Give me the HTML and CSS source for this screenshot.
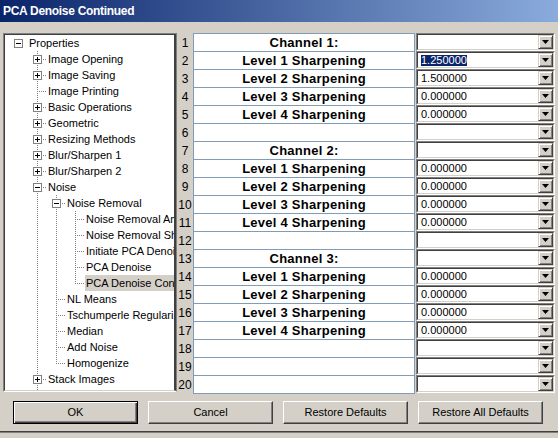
FILE: index.html
```html
<!DOCTYPE html>
<html lang="en">
<head>
    <meta charset="UTF-8">
    <title>PCA Denoise Continued</title>
    <link rel="stylesheet" href="styles.css">
</head>
<body>
    <div class="titlebar">PCA Denoise Continued</div>

    <div class="main">
        <div class="tree">
            <div class="tree-body">
                <div class="node"><span class="cell root"><span class="box"></span></span><span class="text">Properties</span></div>
                <div class="node child"><span class="cell tee"><span class="box plus"></span></span><span class="text">Image Opening</span></div>
                <div class="node child"><span class="cell tee"><span class="box plus"></span></span><span class="text">Image Saving</span></div>
                <div class="node child"><span class="cell tee"></span><span class="text">Image Printing</span></div>
                <div class="node child"><span class="cell tee"><span class="box plus"></span></span><span class="text">Basic Operations</span></div>
                <div class="node child"><span class="cell tee"><span class="box plus"></span></span><span class="text">Geometric</span></div>
                <div class="node child"><span class="cell tee"><span class="box plus"></span></span><span class="text">Resizing Methods</span></div>
                <div class="node child"><span class="cell tee"><span class="box plus"></span></span><span class="text">Blur/Sharpen 1</span></div>
                <div class="node child"><span class="cell tee"><span class="box plus"></span></span><span class="text">Blur/Sharpen 2</span></div>
                <div class="node child"><span class="cell tee"><span class="box"></span></span><span class="text">Noise</span></div>
                <div class="node child"><span class="cell pipe"></span><span class="cell tee"><span class="box"></span></span><span class="text">Noise Removal</span></div>
                <div class="node child"><span class="cell pipe"></span><span class="cell pipe"></span><span class="cell tee"></span><span class="text">Noise Removal Amount</span></div>
                <div class="node child"><span class="cell pipe"></span><span class="cell pipe"></span><span class="cell tee"></span><span class="text">Noise Removal Sharpening</span></div>
                <div class="node child"><span class="cell pipe"></span><span class="cell pipe"></span><span class="cell tee"></span><span class="text">Initiate PCA Denoise</span></div>
                <div class="node child"><span class="cell pipe"></span><span class="cell pipe"></span><span class="cell tee"></span><span class="text">PCA Denoise</span></div>
                <div class="node child"><span class="cell pipe"></span><span class="cell pipe"></span><span class="cell end"></span><span class="text sel">PCA Denoise Continued</span></div>
                <div class="node child"><span class="cell pipe"></span><span class="cell tee"></span><span class="text">NL Means</span></div>
                <div class="node child"><span class="cell pipe"></span><span class="cell tee"></span><span class="text">Tschumperle Regularization</span></div>
                <div class="node child"><span class="cell pipe"></span><span class="cell tee"></span><span class="text">Median</span></div>
                <div class="node child"><span class="cell pipe"></span><span class="cell tee"></span><span class="text">Add Noise</span></div>
                <div class="node child"><span class="cell pipe"></span><span class="cell end"></span><span class="text">Homogenize</span></div>
                <div class="node child"><span class="cell tee"><span class="box plus"></span></span><span class="text">Stack Images</span></div>
                <div class="node child"><span class="cell end"><span class="box plus"></span></span><span class="text">Layers</span></div>
            </div>
        </div>

        <div class="sheet">
            <div class="nums">
                <div>1</div><div>2</div><div>3</div><div>4</div><div>5</div>
                <div>6</div><div>7</div><div>8</div><div>9</div><div>10</div>
                <div>11</div><div>12</div><div>13</div><div>14</div><div>15</div>
                <div>16</div><div>17</div><div>18</div><div>19</div><div>20</div>
            </div>
            <div class="labels">
                <div>Channel 1:</div>
                <div>Level 1 Sharpening</div>
                <div>Level 2 Sharpening</div>
                <div>Level 3 Sharpening</div>
                <div>Level 4 Sharpening</div>
                <div></div>
                <div>Channel 2:</div>
                <div>Level 1 Sharpening</div>
                <div>Level 2 Sharpening</div>
                <div>Level 3 Sharpening</div>
                <div>Level 4 Sharpening</div>
                <div></div>
                <div>Channel 3:</div>
                <div>Level 1 Sharpening</div>
                <div>Level 2 Sharpening</div>
                <div>Level 3 Sharpening</div>
                <div>Level 4 Sharpening</div>
                <div></div>
                <div></div>
                <div></div>
            </div>
            <div class="values">
                <div class="combo"><div class="combo-in"><span class="val"></span><span class="drop"></span></div></div>
                <div class="combo"><div class="combo-in"><span class="val"><span class="hl">1.250000</span></span><span class="drop"></span></div></div>
                <div class="combo"><div class="combo-in"><span class="val">1.500000</span><span class="drop"></span></div></div>
                <div class="combo"><div class="combo-in"><span class="val">0.000000</span><span class="drop"></span></div></div>
                <div class="combo"><div class="combo-in"><span class="val">0.000000</span><span class="drop"></span></div></div>
                <div class="combo"><div class="combo-in"><span class="val"></span><span class="drop"></span></div></div>
                <div class="combo"><div class="combo-in"><span class="val"></span><span class="drop"></span></div></div>
                <div class="combo"><div class="combo-in"><span class="val">0.000000</span><span class="drop"></span></div></div>
                <div class="combo"><div class="combo-in"><span class="val">0.000000</span><span class="drop"></span></div></div>
                <div class="combo"><div class="combo-in"><span class="val">0.000000</span><span class="drop"></span></div></div>
                <div class="combo"><div class="combo-in"><span class="val">0.000000</span><span class="drop"></span></div></div>
                <div class="combo"><div class="combo-in"><span class="val"></span><span class="drop"></span></div></div>
                <div class="combo"><div class="combo-in"><span class="val"></span><span class="drop"></span></div></div>
                <div class="combo"><div class="combo-in"><span class="val">0.000000</span><span class="drop"></span></div></div>
                <div class="combo"><div class="combo-in"><span class="val">0.000000</span><span class="drop"></span></div></div>
                <div class="combo"><div class="combo-in"><span class="val">0.000000</span><span class="drop"></span></div></div>
                <div class="combo"><div class="combo-in"><span class="val">0.000000</span><span class="drop"></span></div></div>
                <div class="combo"><div class="combo-in"><span class="val"></span><span class="drop"></span></div></div>
                <div class="combo"><div class="combo-in"><span class="val"></span><span class="drop"></span></div></div>
                <div class="combo"><div class="combo-in"><span class="val"></span><span class="drop"></span></div></div>
            </div>
        </div>
    </div>

    <div class="buttons">
        <div class="btn default">OK</div>
        <div class="btn">Cancel</div>
        <div class="btn">Restore Defaults</div>
        <div class="btn">Restore All Defaults</div>
    </div>
    <div class="sep"></div>
</body>
</html>
```

FILE: styles.css
```css
body {
    margin: 0;
    width: 558px;
    height: 438px;
    overflow: hidden;
    background: #d4d0c8;
    font-family: "Liberation Sans", Arial, sans-serif;
    font-size: 11px;
    color: #000;
}
.titlebar {
    height: 22px;
    line-height: 22px;
    padding-left: 3px;
    background: linear-gradient(to right, #0a246a, #8aabdc);
    color: #fff;
    font-weight: bold;
    font-size: 12px;
    letter-spacing: -0.3px;
}
.main {
    display: flex;
    align-items: flex-start;
    padding: 11px 0 0 3px;
}

/* tree */
.tree {
    width: 174px;
    box-sizing: border-box;
    border: 1px solid;
    border-color: #808080 #808080 #fff #808080;
}
.tree-body {
    height: 355px;
    overflow: hidden;
    padding-left: 3px;
    border: 1px solid;
    border-right-width: 2px;
    border-color: #404040 #404040 #d4d0c8 #404040;
    background: #fff;
}
.node {
    display: flex;
    height: 16px;
    line-height: 16px;
    white-space: nowrap;
}
.node.child {
    padding-left: 20px;
}
.cell {
    flex: none;
    width: 19px;
    height: 16px;
    display: flex;
    align-items: center;
    justify-content: center;
    background-repeat: no-repeat;
}
.cell.root {
    width: 20px;
}
.cell.pipe {
    background-image: repeating-linear-gradient(#808080 0 1px, transparent 1px 2px);
    background-size: 1px 16px;
    background-position: 9px 0;
}
.cell.tee {
    background-image:
        repeating-linear-gradient(#808080 0 1px, transparent 1px 2px),
        repeating-linear-gradient(to right, #808080 0 1px, transparent 1px 2px);
    background-size: 1px 16px, 10px 1px;
    background-position: 9px 0, 9px 8px;
}
.cell.end {
    background-image:
        repeating-linear-gradient(#808080 0 1px, transparent 1px 2px),
        repeating-linear-gradient(to right, #808080 0 1px, transparent 1px 2px);
    background-size: 1px 9px, 10px 1px;
    background-position: 9px 0, 9px 8px;
}
.box {
    width: 9px;
    height: 9px;
    box-sizing: border-box;
    border: 1px solid #808080;
    background: linear-gradient(#000, #000) center / 5px 1px no-repeat, #fff;
}
.box.plus {
    background:
        linear-gradient(#000, #000) center / 5px 1px no-repeat,
        linear-gradient(#000, #000) center / 1px 5px no-repeat,
        #fff;
}
.text {
    min-width: 0;
    overflow: hidden;
    padding: 0 2px 0 1px;
}
.text.sel {
    background: #d4d0c8;
}

/* sheet */
.sheet {
    display: flex;
    align-items: flex-start;
}
.nums {
    width: 16px;
    font-size: 12px;
}
.nums div {
    height: 18px;
    line-height: 21px;
    text-align: center;
}
.labels {
    width: 222px;
    box-sizing: border-box;
    border: 1px solid #7f9db9;
    background: #fff;
}
.labels div {
    height: 18px;
    box-sizing: border-box;
    border-top: 1px solid #7f9db9;
    text-align: center;
    font-weight: bold;
    font-size: 13px;
    letter-spacing: 0.25px;
    line-height: 17px;
}
.labels div:first-child {
    height: 17px;
    border-top: 0;
}
.values {
    width: 139px;
    margin-left: 1px;
}
.combo {
    height: 18px;
    box-sizing: border-box;
    border: 1px solid;
    border-color: #808080 #fff #fff #808080;
    display: flex;
}
.combo-in {
    flex: 1;
    display: flex;
    border: 1px solid;
    border-color: #404040 #d4d0c8 #d4d0c8 #404040;
    background: #fff;
}
.val {
    flex: 1;
    line-height: 14px;
    padding-left: 3px;
}
.hl {
    display: inline-block;
    line-height: 11px;
    background: #0a246a;
    color: #fff;
}
.drop {
    width: 15px;
    box-sizing: border-box;
    border: 1px solid;
    border-color: #d4d0c8 #404040 #404040 #d4d0c8;
    box-shadow: inset 1px 1px #fff, inset -1px -1px #808080;
    background: #d4d0c8;
    display: flex;
    align-items: center;
    justify-content: center;
}
.drop::before {
    content: "";
    width: 7px;
    height: 4px;
    background: #000;
    clip-path: polygon(0 0, 100% 0, 50% 100%);
}

/* buttons */
.buttons {
    display: flex;
    gap: 10px;
    padding: 7px 0 0 13px;
}
.btn {
    width: 125px;
    height: 23px;
    box-sizing: border-box;
    border: 1px solid;
    border-color: #fff #404040 #404040 #fff;
    box-shadow: inset -1px -1px #808080;
    text-align: center;
    line-height: 21px;
}
.btn.default {
    border-color: #000;
    box-shadow: inset 1px 1px #fff, inset -1px -1px #404040, inset -2px -2px #808080;
}
.sep {
    margin-top: 7px;
    border-top: 1px solid #404040;
    border-bottom: 1px solid #808080;
}
```
